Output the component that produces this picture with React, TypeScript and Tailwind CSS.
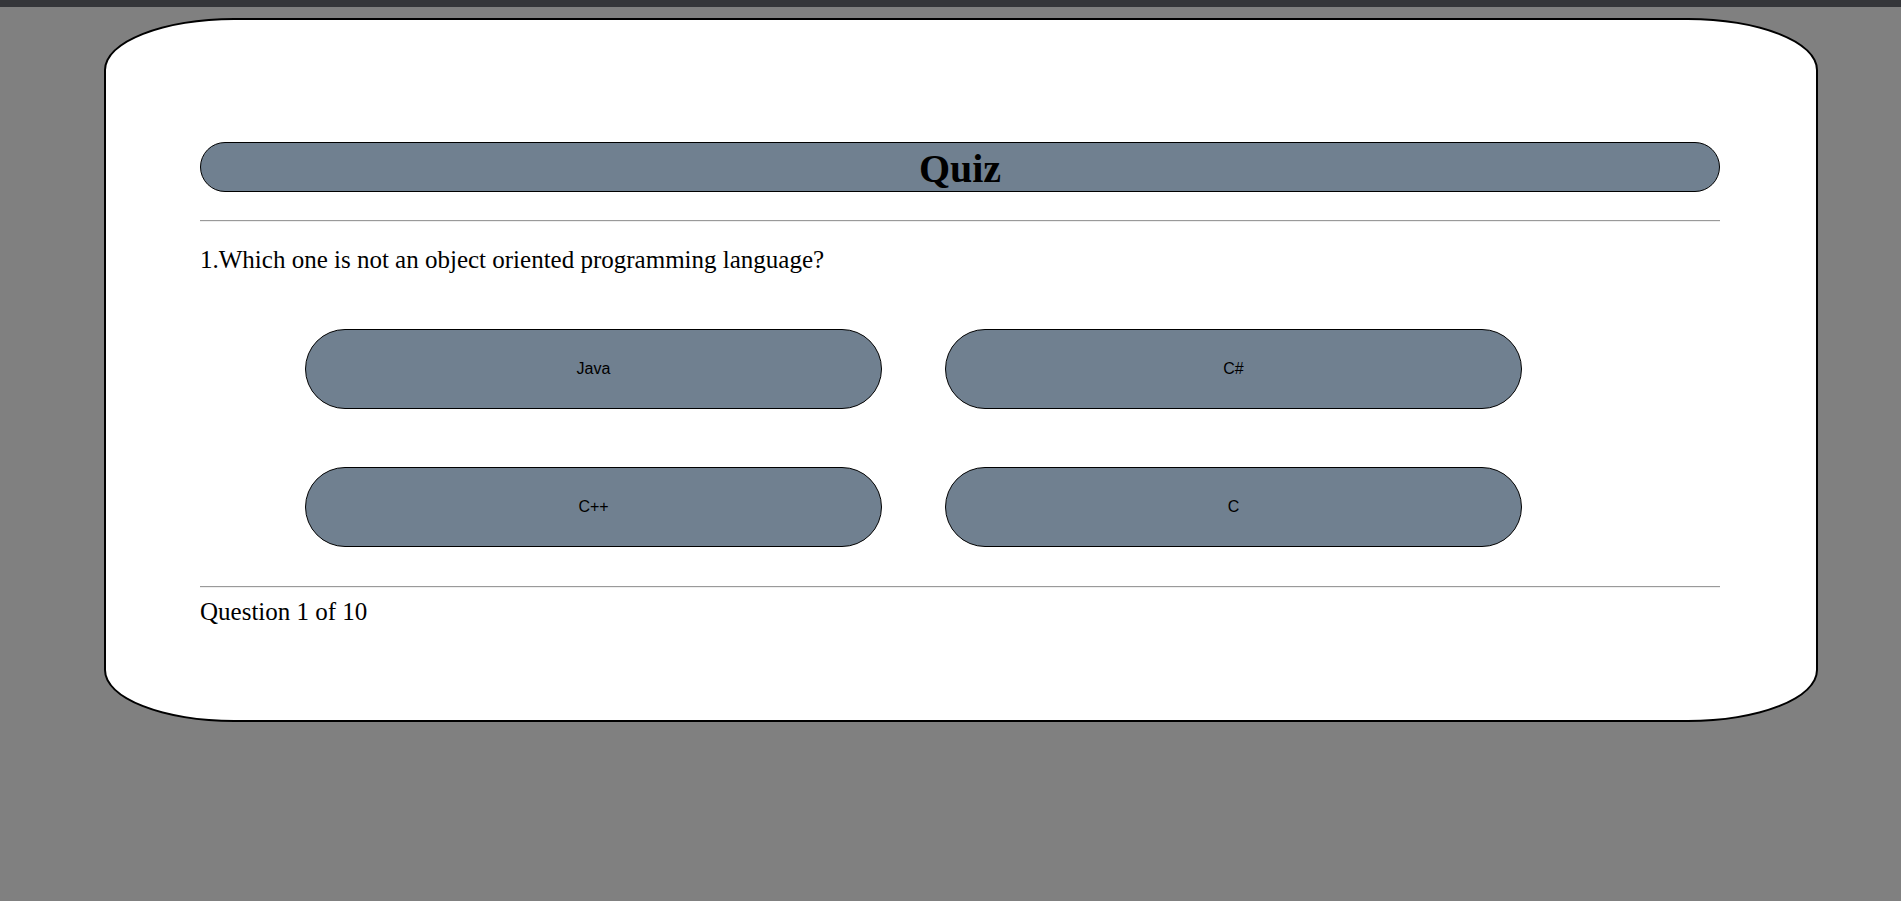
const options = ['Java', 'C#', 'C++', 'C']

export default function App() {
  return (
    <div className="min-h-[901px] bg-[#808080] font-['Liberation_Serif',serif] text-black">
      <div className="h-[7px] bg-[#35363a]" />
      <div className="pt-[11px]">
        <div className="ml-[104px] h-[704px] w-[1714px] rounded-[130px/52px] border-[2.5px] border-black bg-white pl-[94px] pr-[96px] pt-[122px]">
          <div className="flex h-[50px] items-center justify-center rounded-full border border-black bg-[#708090]">
            <h1 className="pt-[3px] text-[40px] font-bold leading-[44px]">Quiz</h1>
          </div>
          <hr className="mt-[28px] h-0 border-t border-b border-t-[#9a9a9a] border-b-[#eeeeee]" />
          <h2 className="mt-[23px] text-[25px] leading-[29px]">
            1.Which one is not an object oriented programming language?
          </h2>
          <div className="mt-[55px] grid grid-cols-[577px_577px] gap-x-[63px] gap-y-[58px] pl-[105px]">
            {options.map((opt) => (
              <button
                key={opt}
                className="h-[80px] rounded-full border border-black bg-[#708090] font-['Liberation_Sans',Arial,sans-serif] text-[16px] text-black"
              >
                {opt}
              </button>
            ))}
          </div>
          <hr className="mt-[39px] h-0 border-t border-b border-t-[#9a9a9a] border-b-[#eeeeee]" />
          <p className="mt-[9px] text-[25px] leading-[29px]">Question 1 of 10</p>
        </div>
      </div>
    </div>
  )
}
